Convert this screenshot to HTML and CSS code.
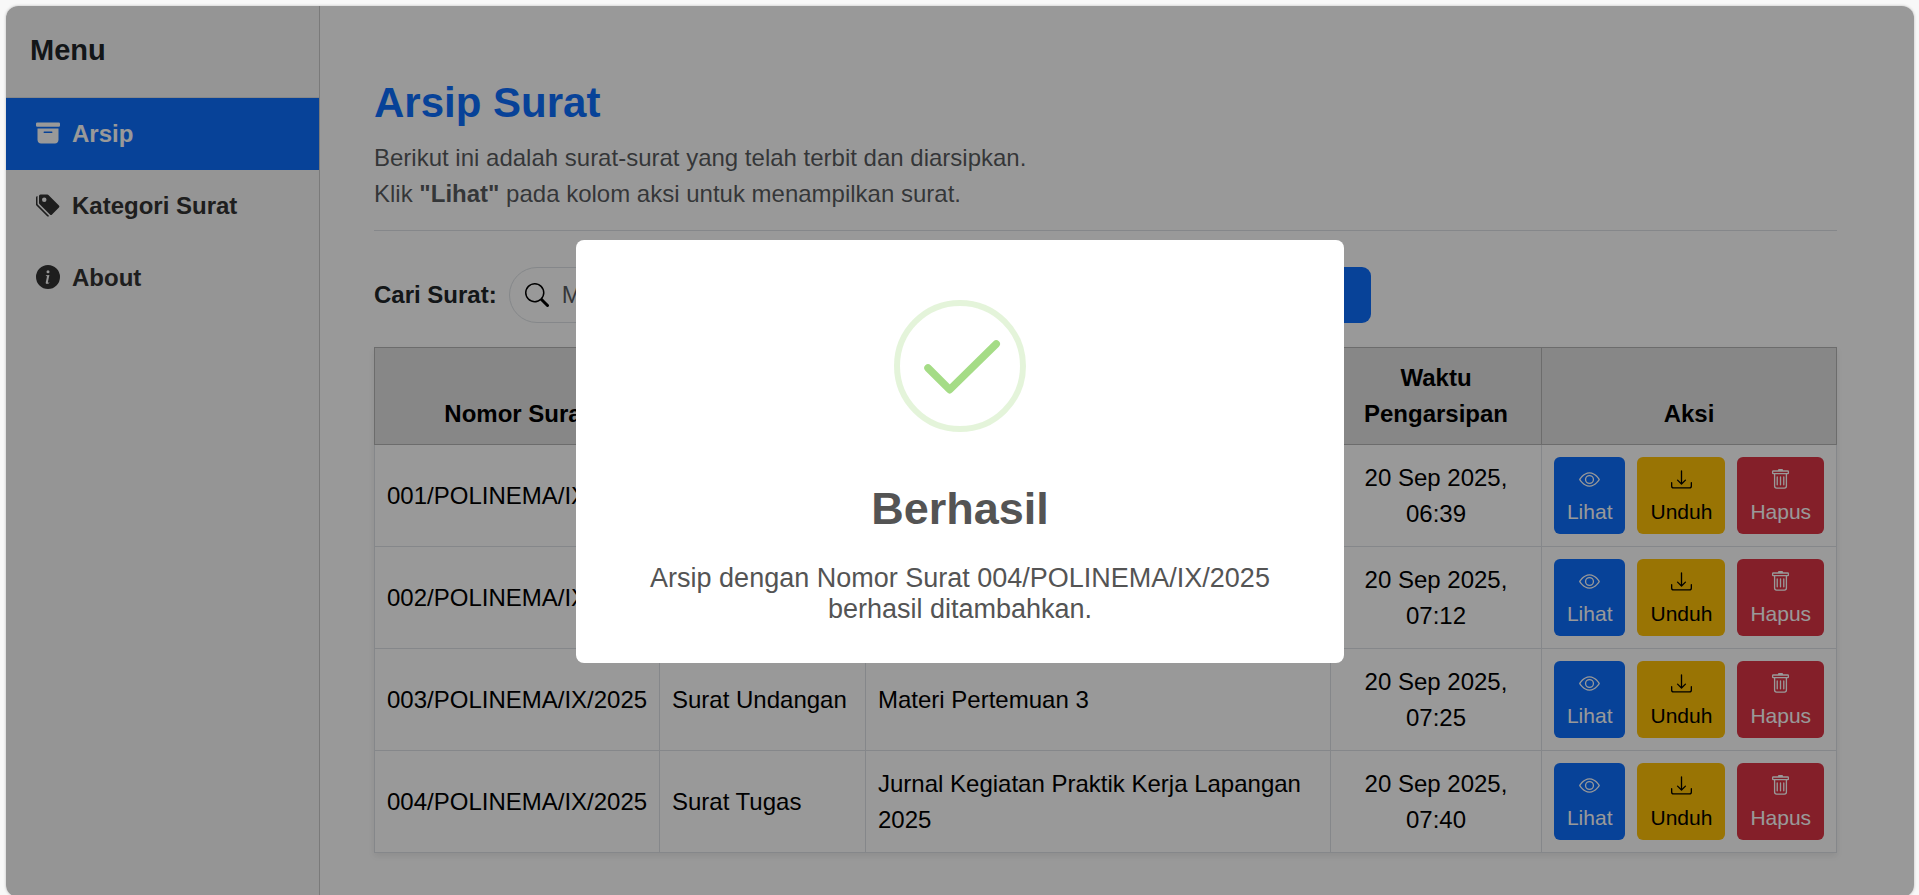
FILE: index.html
```html
<!DOCTYPE html>
<html lang="id">
<head>
<meta charset="utf-8">
<title>Arsip Surat</title>
<link rel="stylesheet" href="styles.css">
</head>
<body>
<svg class="sprite" aria-hidden="true">
  <symbol id="archive" viewBox="0 0 16 16"><path d="M12.643 15C13.979 15 15 13.845 15 12.5V5H1v7.5C1 13.845 2.021 15 3.357 15zM5.5 7h5a.5.5 0 0 1 0 1h-5a.5.5 0 0 1 0-1M.8 1a.8.8 0 0 0-.8.8V3a.8.8 0 0 0 .8.8h14.4A.8.8 0 0 0 16 3V1.800a.8.8 0 0 0-.8-.8z"/></symbol>
  <symbol id="tags" viewBox="0 0 16 16"><path d="M2 2a1 1 0 0 1 1-1h4.586a1 1 0 0 1 .707.293l7 7a1 1 0 0 1 0 1.414l-4.586 4.586a1 1 0 0 1-1.414 0l-7-7A1 1 0 0 1 2 6.586zm3.500 4a1.500 1.500 0 1 0 0-3 1.500 1.500 0 0 0 0 3"/><path d="M1.293 7.793A1 1 0 0 1 1 7.086V2a1 1 0 0 0-1 1v4.586a1 1 0 0 0 .293.707l7 7a1 1 0 0 0 1.414 0l.043-.043z"/></symbol>
  <symbol id="info" viewBox="0 0 16 16"><path d="M8 16A8 8 0 1 0 8 0a8 8 0 0 0 0 16m.93-9.412-1 4.705c-.070.340.029.533.304.533.194 0 .487-.070.686-.246l-.088.416c-.287.346-.920.598-1.465.598-.703 0-1.002-.422-.808-1.319l.738-3.468c.064-.293.006-.399-.287-.470l-.451-.081.082-.381 2.290-.287zM8 5.500a1 1 0 1 1 0-2 1 1 0 0 1 0 2"/></symbol>
  <symbol id="search" viewBox="0 0 16 16"><path d="M11.742 10.344a6.500 6.500 0 1 0-1.397 1.398h-.001q.044.060.098.115l3.850 3.850a1 1 0 0 0 1.415-1.414l-3.850-3.850a1 1 0 0 0-.115-.100zM12 6.500a5.500 5.500 0 1 1-11 0 5.500 5.500 0 0 1 11 0"/></symbol>
  <symbol id="eye" viewBox="0 0 16 16"><path d="M16 8s-3-5.500-8-5.500S0 8 0 8s3 5.500 8 5.500S16 8 16 8M1.173 8a13 13 0 0 1 1.660-2.043C4.120 4.668 5.880 3.500 8 3.500s3.879 1.168 5.168 2.457A13 13 0 0 1 14.828 8q-.086.130-.195.288c-.335.480-.830 1.120-1.465 1.755C11.879 11.332 10.119 12.500 8 12.500s-3.879-1.168-5.168-2.457A13 13 0 0 1 1.172 8z"/><path d="M8 5.500a2.500 2.500 0 1 0 0 5 2.500 2.500 0 0 0 0-5M4.500 8a3.500 3.500 0 1 1 7 0 3.500 3.500 0 0 1-7 0"/></symbol>
  <symbol id="download" viewBox="0 0 16 16"><path d="M.5 9.900a.5.5 0 0 1 .5.5v2.500a1 1 0 0 0 1 1h12a1 1 0 0 0 1-1v-2.500a.5.5 0 0 1 1 0v2.500a2 2 0 0 1-2 2H2a2 2 0 0 1-2-2v-2.500a.5.5 0 0 1 .5-.5"/><path d="M7.646 11.854a.5.5 0 0 0 .708 0l3-3a.5.5 0 0 0-.708-.708L8.500 10.293V1.500a.5.5 0 0 0-1 0v8.793L5.354 8.146a.5.5 0 1 0-.708.708z"/></symbol>
  <symbol id="trash" viewBox="0 0 16 16"><path d="M5.500 5.500A.5.5 0 0 1 6 6v6a.5.5 0 0 1-1 0V6a.5.5 0 0 1 .5-.5m2.500 0a.5.5 0 0 1 .5.5v6a.5.5 0 0 1-1 0V6a.5.5 0 0 1 .5-.5m3 .5a.5.5 0 0 0-1 0v6a.5.5 0 0 0 1 0z"/><path d="M14.500 3a1 1 0 0 1-1 1H13v9a2 2 0 0 1-2 2H5a2 2 0 0 1-2-2V4h-.5a1 1 0 0 1-1-1V2a1 1 0 0 1 1-1H6a1 1 0 0 1 1-1h2a1 1 0 0 1 1 1h3.500a1 1 0 0 1 1 1zM4.118 4 4 4.059V13a1 1 0 0 0 1 1h6a1 1 0 0 0 1-1V4.059L11.882 4zM2.500 3h11V2h-11z"/></symbol>
</svg>
<div class="app">
  <aside class="sidebar">
    <h2 class="sidebar-title">Menu</h2>
    <nav class="menu">
      <a class="menu-link active" href="#arsip"><svg class="icon"><use href="#archive"/></svg>Arsip</a>
      <a class="menu-link" href="#kategori"><svg class="icon"><use href="#tags"/></svg>Kategori Surat</a>
      <a class="menu-link" href="#about"><svg class="icon"><use href="#info"/></svg>About</a>
    </nav>
  </aside>
  <main class="main">
    <h1 class="title">Arsip Surat</h1>
    <p class="intro">Berikut ini adalah surat-surat yang telah terbit dan diarsipkan.<br>Klik <strong>"Lihat"</strong> pada kolom aksi untuk menampilkan surat.</p>
    <hr class="rule">
    <form class="search">
      <label class="search-label" for="q">Cari Surat:</label>
      <div class="search-box">
        <svg class="icon"><use href="#search"/></svg>
        <input class="search-input" id="q" type="text" placeholder="Masukkan judul surat...">
      </div>
      <button class="search-button" type="button">Cari</button>
    </form>
    <table class="table">
      <colgroup><col class="col-number"><col class="col-category"><col><col class="col-time"><col class="col-action"></colgroup>
      <thead>
        <tr><th>Nomor Surat</th><th>Kategori</th><th>Judul</th><th>Waktu Pengarsipan</th><th>Aksi</th></tr>
      </thead>
      <tbody>
        <tr>
          <td>001/POLINEMA/IX/2025</td><td></td><td></td><td class="time">20 Sep 2025, 06:39</td>
          <td><div class="actions"><button class="btn view" type="button"><svg class="btn-icon"><use href="#eye"/></svg>Lihat</button><button class="btn download" type="button"><svg class="btn-icon"><use href="#download"/></svg>Unduh</button><button class="btn delete" type="button"><svg class="btn-icon"><use href="#trash"/></svg>Hapus</button></div></td>
        </tr>
        <tr>
          <td>002/POLINEMA/IX/2025</td><td></td><td></td><td class="time">20 Sep 2025, 07:12</td>
          <td><div class="actions"><button class="btn view" type="button"><svg class="btn-icon"><use href="#eye"/></svg>Lihat</button><button class="btn download" type="button"><svg class="btn-icon"><use href="#download"/></svg>Unduh</button><button class="btn delete" type="button"><svg class="btn-icon"><use href="#trash"/></svg>Hapus</button></div></td>
        </tr>
        <tr>
          <td>003/POLINEMA/IX/2025</td><td>Surat Undangan</td><td>Materi Pertemuan 3</td><td class="time">20 Sep 2025, 07:25</td>
          <td><div class="actions"><button class="btn view" type="button"><svg class="btn-icon"><use href="#eye"/></svg>Lihat</button><button class="btn download" type="button"><svg class="btn-icon"><use href="#download"/></svg>Unduh</button><button class="btn delete" type="button"><svg class="btn-icon"><use href="#trash"/></svg>Hapus</button></div></td>
        </tr>
        <tr>
          <td>004/POLINEMA/IX/2025</td><td>Surat Tugas</td><td>Jurnal Kegiatan Praktik Kerja Lapangan 2025</td><td class="time">20 Sep 2025, 07:40</td>
          <td><div class="actions"><button class="btn view" type="button"><svg class="btn-icon"><use href="#eye"/></svg>Lihat</button><button class="btn download" type="button"><svg class="btn-icon"><use href="#download"/></svg>Unduh</button><button class="btn delete" type="button"><svg class="btn-icon"><use href="#trash"/></svg>Hapus</button></div></td>
        </tr>
      </tbody>
    </table>
  </main>
  <div class="overlay">
    <div class="modal" role="dialog" aria-labelledby="modal-title">
      <svg class="modal-icon" viewBox="0 0 132 132"><circle class="ring" cx="66" cy="66" r="63"/><path class="tick" d="M34 68 55.700 89.700 102.200 44"/></svg>
      <h2 class="modal-title" id="modal-title">Berhasil</h2>
      <p class="modal-text">Arsip dengan Nomor Surat 004/POLINEMA/IX/2025 berhasil ditambahkan.</p>
    </div>
  </div>
</div>
</body>
</html>
```

FILE: styles.css
```css
* { box-sizing: border-box; }

body {
  margin: 0;
  height: 100vh;
  padding: 6px 5px 0 6px;
  overflow: hidden;
  background: #f8f8f8;
  color: #212529;
  font: 24px/36px "Liberation Sans", Arial, sans-serif;
}

h1, h2, p { margin: 0; }

.sprite { display: none; }

.app {
  position: relative;
  display: flex;
  min-height: calc(100vh - 5px);
  overflow: hidden;
  border-radius: 12px;
  background: #fff;
  box-shadow: 0 0 3px rgba(0, 0, 0, .25);
}

.icon { flex: none; width: 24px; height: 24px; fill: currentColor; }

/* Sidebar */
.sidebar {
  flex: none;
  width: 314px;
  border-right: 1px solid #ccc;
  background: #f8f8f8;
}
.sidebar-title {
  padding: 22px 24px 24px;
  border-bottom: 1px solid #dee2e6;
  font-size: 29px;
  line-height: 45px;
}
.menu { display: flex; flex-direction: column; }
.menu-link {
  display: flex;
  align-items: center;
  gap: 12px;
  padding: 18px 30px;
  color: #333;
  font-weight: bold;
  text-decoration: none;
}
.menu-link .icon { margin-bottom: 2px; }
.menu-link.active { background: #0d6efd; color: #fff; }

/* Content */
.main { flex: 1; min-width: 0; padding: 71px 77px 44px 54px; }
.title { margin-bottom: 11px; color: #0d6efd; font-size: 42px; line-height: 52px; }
.intro { margin-bottom: 18px; color: rgba(33, 37, 41, .75); }
.rule { margin: 0 0 36px; border: 0; border-top: 1px solid #dee2e6; }

.search { display: flex; align-items: center; gap: 12px; max-width: 997px; margin-bottom: 24px; }
.search-label { font-weight: bold; }
.search-box {
  flex: 1;
  display: flex;
  align-items: center;
  gap: 13px;
  height: 56px;
  padding: 0 15px;
  border: 1px solid #dee2e6;
  border-radius: 28px;
  color: #000;
}
.search-input { flex: 1; min-width: 0; padding: 0; border: 0; outline: 0; background: none; color: #212529; font: inherit; }
.search-input::placeholder { color: rgba(33, 37, 41, .75); }
.search-button {
  height: 56px;
  padding: 0 36px;
  border: 0;
  border-radius: 9px;
  background: #0d6efd;
  color: #fff;
  font: inherit;
}

.table {
  width: 100%;
  border-collapse: collapse;
  table-layout: fixed;
  box-shadow: 0 3px 6px rgba(0, 0, 0, .08);
  color: #000;
}
.col-number { width: 285px; }
.col-category { width: 206px; }
.col-time { width: 211px; }
.col-action { width: 295px; }
th, td { padding: 12px; border: 1px solid #dee2e6; vertical-align: middle; text-align: left; }
th { border-color: #b5b5b5; background: #e2e2e2; vertical-align: bottom; text-align: center; }
.time { text-align: center; }

.actions { display: flex; justify-content: center; gap: 12px; }
.btn {
  display: flex;
  flex-direction: column;
  align-items: center;
  gap: 6px;
  padding: 12px 13px 6px;
  border: 0;
  border-radius: 6px;
  color: #fff;
  font: 21px/32px "Liberation Sans", Arial, sans-serif;
}
.btn-icon { width: 21px; height: 21px; fill: currentColor; }
.view { background: #0d6efd; }
.download { background: #ffc107; color: #000; }
.delete { background: #dc3545; }

/* Dialog */
.overlay {
  position: absolute;
  inset: 0;
  display: flex;
  align-items: center;
  justify-content: center;
  background: rgba(0, 0, 0, .4);
}
.modal {
  display: flex;
  flex-direction: column;
  align-items: center;
  width: 768px;
  max-width: 90%;
  padding: 60px 40px 38px;
  border-radius: 8px;
  background: #fff;
  color: #545454;
  text-align: center;
}
.modal-icon { width: 132px; height: 132px; margin-bottom: 51px; fill: none; }
.ring { stroke: #a5dc86; stroke-opacity: .3; stroke-width: 6; }
.tick { stroke: #a5dc86; stroke-width: 7.5; stroke-linecap: round; stroke-linejoin: round; }
.modal-title { margin-bottom: 28px; font-size: 45px; line-height: 52px; }
.modal-text { font-size: 27px; line-height: 31px; }
```
